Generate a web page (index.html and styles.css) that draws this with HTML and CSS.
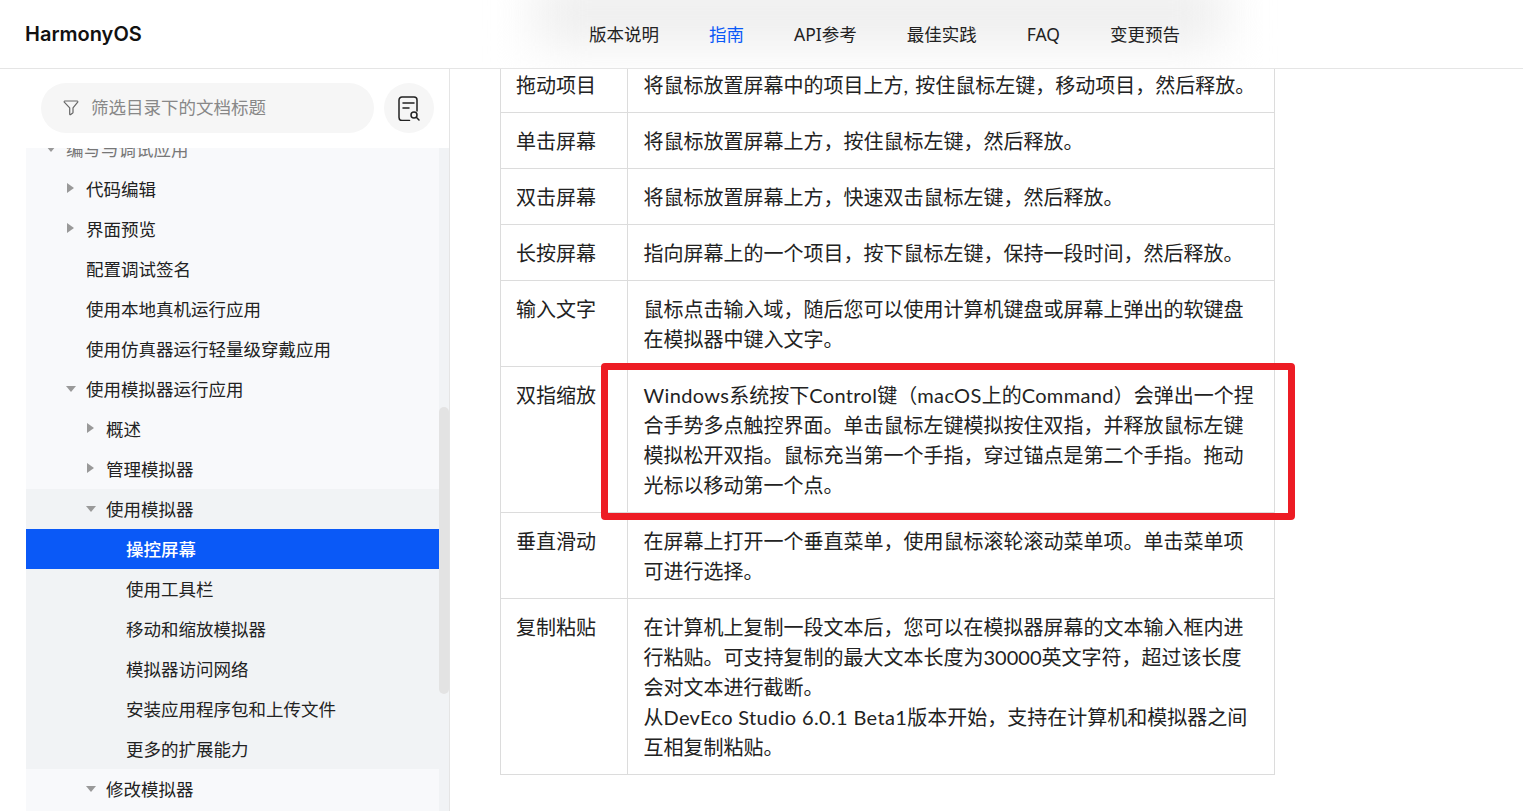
FILE: index.html
```html
<!DOCTYPE html>
<html lang="zh-CN">
<head>
<meta charset="utf-8">
<title>操控屏幕</title>
<link rel="stylesheet" href="styles.css">
</head>
<body>
<header class="topbar">
  <div class="brand">HarmonyOS</div>
  <nav class="nav">
    <a>版本说明</a>
    <a class="active">指南</a>
    <a>API参考</a>
    <a>最佳实践</a>
    <a>FAQ</a>
    <a>变更预告</a>
  </nav>
</header>
<div class="page">
  <aside class="sidebar">
    <div class="filter-panel">
      <div class="filter">
        <svg class="filter-icon" viewBox="0 0 16 16" width="16" height="16"><path d="M1.800 1h12.400a.7.7 0 0 1 .5 1.100L10 7.800v4.600a.8.8 0 0 1-.3.6l-2 1.500a.6.6 0 0 1-1-.5V7.800L1.300 2.100a.7.7 0 0 1 .5-1.100z" fill="none" stroke="#666" stroke-width="1.200" stroke-linejoin="round"/></svg>
        <span class="filter-text">筛选目录下的文档标题</span>
      </div>
      <div class="doc-btn">
        <svg viewBox="-1 -1 26 26" width="26" height="26"><path d="M12.500 24.500H5a3 3 0 0 1-3-3V4a3 3 0 0 1 3-3h12a3 3 0 0 1 3 3v11" fill="none" stroke="#222" stroke-width="1.500" stroke-linecap="round"/><path d="M6 7h11M6 12h6" stroke="#222" stroke-width="1.500" stroke-linecap="round"/><circle cx="17" cy="19" r="3" fill="none" stroke="#222" stroke-width="1.500"/><path d="M19.300 21.300l2.700 2.700" stroke="#222" stroke-width="1.500" stroke-linecap="round"/></svg>
      </div>
    </div>
    <div class="tree-wrap">
      <div class="tree">
        <div class="row clipped l0"><i class="arrow down"></i>编写与调试应用</div>
        <div class="row l1"><i class="arrow right"></i>代码编辑</div>
        <div class="row l1"><i class="arrow right"></i>界面预览</div>
        <div class="row l1">配置调试签名</div>
        <div class="row l1">使用本地真机运行应用</div>
        <div class="row l1">使用仿真器运行轻量级穿戴应用</div>
        <div class="row l1"><i class="arrow down"></i>使用模拟器运行应用</div>
        <div class="row l2"><i class="arrow right"></i>概述</div>
        <div class="row l2"><i class="arrow right"></i>管理模拟器</div>
        <div class="group">
          <div class="row l2"><i class="arrow down"></i>使用模拟器</div>
          <div class="row l3 selected">操控屏幕</div>
          <div class="row l3">使用工具栏</div>
          <div class="row l3">移动和缩放模拟器</div>
          <div class="row l3">模拟器访问网络</div>
          <div class="row l3">安装应用程序包和上传文件</div>
          <div class="row l3">更多的扩展能力</div>
        </div>
        <div class="row l2"><i class="arrow down"></i>修改模拟器</div>
      </div>
      <div class="scrollbar"><div class="thumb"></div></div>
    </div>
  </aside>
  <main class="content">
    <table class="doc-table">
      <tr class="first"><td>拖动项目</td><td>将鼠标放置屏幕中的项目上方<span class="gap">, </span>按住鼠标左键，移动项目，然后释放。</td></tr>
      <tr><td>单击屏幕</td><td>将鼠标放置屏幕上方，按住鼠标左键，然后释放。</td></tr>
      <tr><td>双击屏幕</td><td>将鼠标放置屏幕上方，快速双击鼠标左键，然后释放。</td></tr>
      <tr><td>长按屏幕</td><td>指向屏幕上的一个项目，按下鼠标左键，保持一段时间，然后释放。</td></tr>
      <tr><td>输入文字</td><td>鼠标点击输入域，随后您可以使用计算机键盘或屏幕上弹出的软键盘在模拟器中键入文字。</td></tr>
      <tr><td>双指缩放</td><td><span class="lat">Windows</span>系统按下<span class="lat">Control</span>键（<span class="lat">macOS</span>上的<span class="lat">Command</span>）会弹出一个捏合手势多点触控界面。单击鼠标左键模拟按住双指，并释放鼠标左键模拟松开双指。鼠标充当第一个手指，穿过锚点是第二个手指。拖动光标以移动第一个点。</td></tr>
      <tr><td>垂直滑动</td><td>在屏幕上打开一个垂直菜单，使用鼠标滚轮滚动菜单项。单击菜单项可进行选择。</td></tr>
      <tr><td>复制粘贴</td><td>在计算机上复制一段文本后，您可以在模拟器屏幕的文本输入框内进行粘贴。可支持复制的最大文本长度为30000英文字符，超过该长度会对文本进行截断。<br>从<span class="lat">DevEco Studio 6.0.1 Beta1</span>版本开始，支持在计算机和模拟器之间互相复制粘贴。</td></tr>
    </table>
  </main>
</div>
<div class="highlight"></div>
</body>
</html>
```
FILE: styles.css
```css
* { box-sizing: border-box; }
html, body { margin: 0; height: 100%; overflow: hidden; }
body {
  font-family: "Noto Sans", "Noto Sans CJK SC", sans-serif;
  color: #222;
  background: #fff;
  display: flex;
  flex-direction: column;
}
.topbar {
  height: 69px;
  flex: none;
  border-bottom: 1px solid #e5e5e5;
  display: flex;
  align-items: center;
  padding-left: 25px;
  position: relative;
  overflow: hidden;
}
.topbar::before {
  content: "";
  position: absolute;
  left: 535px;
  top: -20px;
  width: 690px;
  height: 66px;
  background: #eeeeee;
  filter: blur(24px);
}
.brand {
  position: relative;
  font-family: "Inter", sans-serif;
  font-size: 20px;
  line-height: 24px;
  font-weight: 600;
  color: #111;
  width: 564px;
}
.nav {
  position: relative;
  display: flex;
  gap: 50px;
  font-size: 17.500px;
  line-height: 30px;
  color: #222;
}
.nav .active { color: #0a59f7; }
.page { flex: 1; min-height: 0; display: flex; }
.sidebar {
  width: 424px;
  margin-left: 26px;
  flex: none;
  border-right: 1px solid #e5e5e5;
  display: flex;
  flex-direction: column;
  min-height: 0;
}
.filter-panel {
  height: 79px;
  flex: none;
  padding: 14px 15px 0;
  display: flex;
  gap: 10px;
}
.filter {
  width: 333px;
  height: 50px;
  border-radius: 25px;
  background: #f6f6f6;
  display: flex;
  align-items: center;
  padding-left: 22px;
  gap: 12px;
  color: #888;
  font-size: 17.500px;
}
.filter-text { margin-top: -3px; }
.doc-btn {
  width: 50px;
  height: 50px;
  border-radius: 50%;
  background: #f6f6f6;
  display: flex;
  align-items: center;
  justify-content: center;
}
.tree-wrap { flex: 1; min-height: 0; display: flex; overflow: hidden; background: #f8f9fb; }
.tree { flex: 1; min-width: 0; }
.scrollbar { width: 10px; flex: none; background: #f1f3f5; padding-top: 259px; }
.thumb { height: 287px; background: #e3e3e3; border-radius: 5px; }
.group { background: #f1f3f5; }
.row {
  height: 40px;
  line-height: 40px;
  font-size: 17.500px;
  color: #222;
  position: relative;
  white-space: nowrap;
}
.l0 { padding-left: 40px; }
.l1 { padding-left: 60px; }
.l2 { padding-left: 80px; }
.l3 { padding-left: 100px; }
.clipped { margin-top: -19px; color: #777; }
.selected { background: #0a59f7; color: #fff; font-weight: 500; }
.arrow { position: absolute; width: 0; height: 0; }
.arrow.right {
  top: 14px;
  margin-left: -19px;
  border-left: 7px solid #999;
  border-top: 5px solid transparent;
  border-bottom: 5px solid transparent;
}
.arrow.down {
  top: 17px;
  margin-left: -20px;
  border-top: 6px solid #999;
  border-left: 5px solid transparent;
  border-right: 5px solid transparent;
}
.content { flex: 1; min-width: 0; padding-left: 50px; overflow: hidden; }
.doc-table {
  width: 775px;
  border-collapse: collapse;
  table-layout: fixed;
  font-family: "Lato", "Noto Sans CJK SC", sans-serif;
  font-size: 20px;
  line-height: 30px;
  color: #222;
}
.doc-table td {
  border: 1px solid #dcdcdc;
  padding: 13px 16px 12px 15.500px;
  vertical-align: top;
}
.doc-table td:first-child { width: 127px; padding-left: 15px; padding-right: 0; }
.doc-table .first td { border-top: 0; padding-top: 1px; padding-bottom: 12px; }
.lat { letter-spacing: 0.350px; }
.gap { letter-spacing: 1px; }
.highlight {
  position: absolute;
  left: 601px;
  top: 363px;
  width: 694px;
  height: 157px;
  border: 7px solid #ed1c24;
  border-radius: 4px;
}
```
